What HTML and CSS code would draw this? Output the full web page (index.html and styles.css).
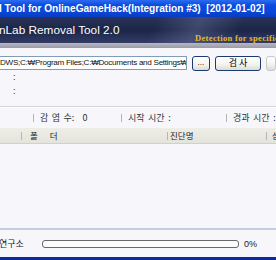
FILE: index.html
```html
<!DOCTYPE html>
<html>
<head>
<meta charset="utf-8">
<link rel="stylesheet" href="styles.css">
</head>
<body>
<div class="window">
  <div class="titlebar"><span class="title-text">l Tool for OnlineGameHack(Integration #3)&nbsp;&nbsp;[2012-01-02]</span></div>
  <div class="banner">
    <span class="banner-title">nLab Removal Tool 2.0</span>
    <span class="banner-sub">Detection for specific malware</span>
  </div>
  <div class="band"></div>
  <div class="content">
    <div class="path-row">
      <div class="path-input">DWS;C:₩Program Files;C:₩Documents and Settings₩</div>
      <div class="btn btn-dots">...</div>
      <div class="btn btn-scan">검 사</div>
      <div class="btn btn-edge"></div>
    </div>
    <div class="info-line"><span class="colon">:</span></div>
    <div class="info-line"><span class="colon">:</span></div>
    <div class="sep"></div>
    <div class="status-row">
      <span class="stat s1"><i class="bar"></i>감 염 수:<span class="num">0</span></span>
      <span class="stat s2"><i class="bar"></i>시작 시간 :</span>
      <span class="stat s3"><i class="bar"></i>경과 시간 :</span>
    </div>
    <div class="list">
      <div class="list-head">
        <span class="col c1"><i class="bar"></i>폴<span class="gap"></span>더</span>
        <span class="col c2"><i class="bar"></i>진단명</span>
        <span class="col c3"><i class="bar"></i>상</span>
      </div>
      <div class="list-body"></div>
    </div>
    <div class="footer">
      <span class="brand">연구소</span>
      <div class="progress"></div>
      <span class="pct">0%</span>
    </div>
  </div>
  <div class="bottom-line"></div>
</div>
</body>
</html>
```
FILE: styles.css
```css
html, body {
  margin: 0;
  padding: 0;
  width: 276px;
  height: 260px;
  overflow: hidden;
  background: #f6f6fb;
  font-family: "Liberation Sans", "Noto Sans CJK KR", sans-serif;
}
.window {
  display: flex;
  flex-direction: column;
  height: 260px;
}
.titlebar {
  height: 17px;
  background: linear-gradient(180deg, #2b6cf0 0%, #0a4ce0 30%, #0846d8 70%, #0a3cc0 100%);
  color: #fff;
  font-family: "Liberation Sans", sans-serif;
  font-weight: bold;
  font-size: 10.1px;
  line-height: 17px;
  white-space: nowrap;
  overflow: hidden;
}
.title-text {
  margin-left: -1px;
}
.banner {
  height: 26px;
  background:
    linear-gradient(115deg, rgba(255,255,255,0) 55%, rgba(120,130,170,0.35) 70%, rgba(255,255,255,0) 85%),
    linear-gradient(180deg, #2a3458 0%, #1c2548 50%, #323c64 100%);
  position: relative;
  white-space: nowrap;
  overflow: hidden;
}
.banner-title {
  position: absolute;
  left: -1px;
  top: 6px;
  color: #fff;
  font-size: 11.8px;
  line-height: 14px;
}
.banner-sub {
  position: absolute;
  left: 195px;
  top: 16px;
  color: #e8b830;
  font-family: "Liberation Serif", serif;
  font-weight: bold;
  font-size: 8.5px;
  letter-spacing: 0.35px;
  line-height: 10px;
}
.band {
  height: 5px;
  background: linear-gradient(180deg, #b8b8c4, #9a9aa8);
}
.content {
  flex: 1;
  display: flex;
  flex-direction: column;
  background: #f6f6fb;
}
.path-row {
  display: flex;
  align-items: center;
  height: 14px;
  margin-top: 8px;
  gap: 0;
}
.path-input {
  width: 193px;
  height: 14px;
  box-sizing: border-box;
  border: 1px solid #7f9db9;
  border-left: none;
  background: #fff;
  font-family: "Liberation Sans", "Noto Sans CJK KR", sans-serif;
  font-size: 8.1px;
  letter-spacing: -0.28px;
  line-height: 12px;
  white-space: nowrap;
  overflow: hidden;
  color: #111;
  padding-left: 0;
}
.btn {
  height: 15px;
  box-sizing: border-box;
  border: 1px solid #1c3a70;
  border-radius: 3px;
  background: linear-gradient(180deg, #ffffff 0%, #f2f2ee 60%, #dcdcd4 100%);
  font-size: 9px;
  line-height: 12px;
  text-align: center;
  color: #000;
}
.btn-dots {
  width: 18px;
  margin-left: 5px;
  font-size: 8px;
  line-height: 11px;
}
.btn-scan {
  width: 48px;
  margin-left: 5px;
  font-family: "Noto Sans CJK KR", sans-serif;
  font-size: 9px;
}
.btn-edge {
  width: 10px;
  margin-left: 5px;
  border-color: #c8c8c8;
}
.info-line {
  height: 13px;
  margin-top: 1px;
  font-size: 9px;
  line-height: 13px;
  color: #222;
}
.info-line:first-of-type { margin-top: 4px; }
.colon {
  margin-left: 13px;
}
.sep {
  height: 1px;
  margin-top: 8px;
  background: #d4d4da;
  border-bottom: 1px solid #fff;
}
.status-row {
  position: relative;
  height: 20px;
  font-family: "Noto Sans CJK KR", sans-serif;
  font-size: 9px;
  line-height: 20px;
  color: #333;
  word-spacing: 1.5px;
}
.num {
  margin-left: 8px;
}
.stat {
  position: absolute;
  top: 0;
  white-space: nowrap;
}
.bar {
  display: inline-block;
  width: 1px;
  height: 8px;
  background: #b4b4b4;
  margin-right: 6px;
  vertical-align: -1px;
}
.s1 { left: 33px; }
.s2 { left: 121px; }
.s3 { left: 226px; }
.list {
  display: flex;
  flex-direction: column;
  flex: 1;
}
.list-head {
  position: relative;
  height: 15px;
  background: linear-gradient(180deg, #eeeee6, #e4e4dc);
  border-bottom: 1px solid #d0d0cc;
  font-family: "Noto Sans CJK KR", sans-serif;
  font-size: 8.5px;
  line-height: 15px;
  color: #222;
}
.col {
  position: absolute;
  top: 0;
  white-space: nowrap;
}
.col .bar { margin-right: 8px; }
.gap {
  display: inline-block;
  width: 12px;
}
.c1 { left: 21px; }
.c2 { left: 167px; }
.c2 .bar { margin-right: 2px; }
.c3 { left: 266px; }
.c3 .bar { margin-right: 5px; }
.list-body {
  flex: 1;
  background: #f6f6fb;
  border-bottom: 2px solid #c4cede;
}
.footer {
  display: flex;
  align-items: center;
  height: 27px;
  font-family: "Noto Sans CJK KR", sans-serif;
  font-size: 9px;
  color: #222;
}
.brand {
  width: 43px;
  margin-left: -1px;
}
.progress {
  width: 197px;
  height: 8px;
  box-sizing: border-box;
  border: 1px solid #686868;
  border-radius: 3px;
  background: #fbfbfb;
}
.pct {
  margin-left: 5px;
  font-family: "Liberation Sans", sans-serif;
  font-size: 9px;
}
.bottom-line {
  height: 3px;
  background: #0a2c9c;
}
```
